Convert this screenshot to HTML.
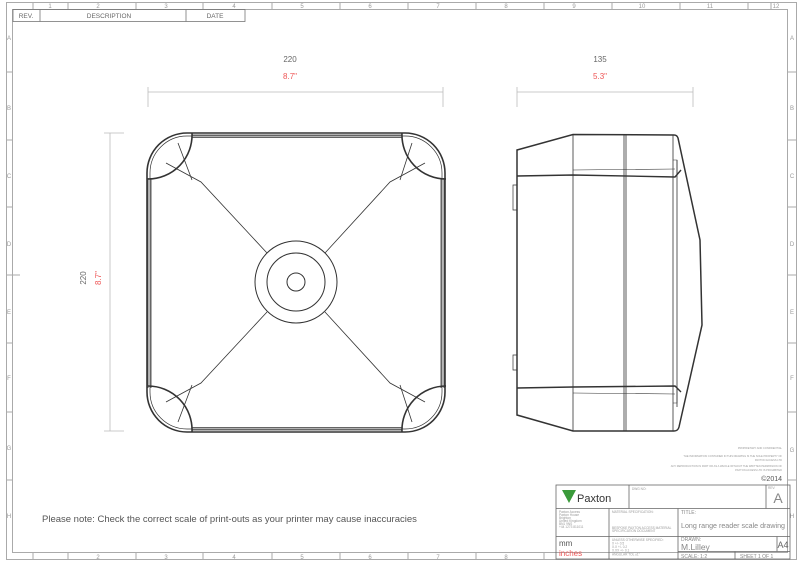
<!DOCTYPE html>
<html><head><meta charset="utf-8"><style>
html,body{margin:0;padding:0;background:#fff;}
svg{display:block;font-family:"Liberation Sans",sans-serif;}
</style></head><body>
<svg width="800" height="566" viewBox="0 0 800 566" xmlns="http://www.w3.org/2000/svg">
<g fill="none" stroke="#aaa" stroke-width="1">
<rect x="6.5" y="2.5" width="790" height="557"/>
<rect x="12.5" y="9.5" width="775" height="543"/>
<path d="M33 2v7M68 2v7M136 2v7M203 2v7M272 2v7M340 2v7M408 2v7M476 2v7M544 2v7M612 2v7M680 2v7M748 2v7M771 2v7"/>
<path d="M33 553v7M68 553v7M136 553v7M203 553v7M272 553v7M340 553v7M408 553v7M476 553v7M544 553v7"/>
<path d="M6 72h6M6 140h6M6 207h6M6 275h14M6 343h6M6 412h6M6 480h6"/>
<path d="M788 72h9M788 140h9M788 207h9M788 275h9M788 343h9M788 412h9M788 480h9"/>
</g>
<g font-size="6" fill="#999" text-anchor="middle">
<text x="50" y="8">1</text><text x="98" y="8">2</text><text x="166" y="8">3</text><text x="234" y="8">4</text><text x="302" y="8">5</text><text x="370" y="8">6</text><text x="438" y="8">7</text><text x="506" y="8">8</text><text x="574" y="8">9</text><text x="642" y="8">10</text><text x="710" y="8">11</text><text x="776" y="8">12</text>
<text x="98" y="559">2</text><text x="166" y="559">3</text><text x="234" y="559">4</text><text x="302" y="559">5</text><text x="370" y="559">6</text><text x="438" y="559">7</text><text x="506" y="559">8</text>
<text x="9" y="40">A</text><text x="9" y="110">B</text><text x="9" y="178">C</text><text x="9" y="246">D</text><text x="9" y="314">E</text><text x="9" y="380">F</text><text x="9" y="450">G</text><text x="9" y="518">H</text>
<text x="792" y="40">A</text><text x="792" y="110">B</text><text x="792" y="178">C</text><text x="792" y="246">D</text><text x="792" y="314">E</text><text x="792" y="380">F</text><text x="792" y="452">G</text><text x="792" y="518">H</text>
</g>
<g fill="none" stroke="#777" stroke-width="0.8"><rect x="13" y="9.5" width="232" height="12"/><path d="M40 9.5v12M186 9.5v12"/></g>
<g font-size="6.5" fill="#666" text-anchor="middle"><text x="26" y="18">REV.</text><text x="109" y="18">DESCRIPTION</text><text x="215" y="18">DATE</text></g>
<g stroke="#bbb" stroke-width="0.8" fill="none">
<path d="M148 87v20M443 87v20M148 92h295"/>
<path d="M517 87v20M693 87v20M517 92h176"/>
<path d="M104 133h20M104 431h20M110 133v298"/>
</g>
<g font-size="8" text-anchor="middle"><text x="290" y="62" fill="#666">220</text><text x="290" y="79" fill="#e55">8.7"</text>
<text x="600" y="62" fill="#666">135</text><text x="600" y="79" fill="#e55">5.3"</text>
<text transform="translate(86,278) rotate(-90)" fill="#666">220</text><text transform="translate(101,278) rotate(-90)" fill="#e55">8.7"</text></g>
<g fill="none" stroke="#333" stroke-width="1">
<rect x="147" y="133" width="298" height="299" rx="40" stroke-width="1.6"/>
<rect x="150" y="136" width="292" height="293" rx="37" stroke-width="0.7"/>
<path d="M192 135h210M192 137.5h210M192 430h210M192 427.5h210M148 178v210M151 178v210M444 178v210M441 178v210" stroke-width="0.8"/>
<path d="M192 133a44 44 0 0 1 -44 46M402 133a44 44 0 0 0 44 46M192 432a44 44 0 0 0 -44 -46M402 432a44 44 0 0 1 44 -46" stroke-width="1.6"/>
<path d="M166 163L201 182L267 253M178 143L192 180M425 163L390 182L325 253M412 143L400 180M166 402L201 383L267 312M178 422L192 385M425 402L390 383L325 312M412 422L400 385" stroke-width="0.8"/>
<circle cx="296" cy="282" r="41"/><circle cx="296" cy="282" r="29"/><circle cx="296" cy="282" r="9"/>
</g>
<g fill="none" stroke="#333" stroke-width="1">
<path d="M517 150L573 134.5L674 135Q677 135 678 138L700 240L702 325L679 427Q678 431 674 431L573 431L517 415Z" stroke-width="1.5"/>
<path d="M517 176L573 175L675 177L681 170M517 388L573 387L675 386L681 392" stroke-width="1.4"/>
<path d="M573 134v297M624 134v297M626 134v297M673 135v296M677 160v247" stroke-width="0.8"/>
<path d="M573 170L675 169M573 393L675 394M673 160h4v15M673 403h4v-15" stroke-width="0.6"/>
<path d="M517 185h-4v25h4M517 355h-4v15h4" stroke-width="0.7"/>
</g>
<g font-size="2.6" fill="#999" text-anchor="end"><text x="782" y="449">PROPRIETARY AND CONFIDENTIAL</text><text x="782" y="457">THE INFORMATION CONTAINED IN THIS DRAWING IS THE SOLE PROPERTY OF</text><text x="782" y="461">PAXTON ACCESS LTD</text><text x="782" y="467">ANY REPRODUCTION IN PART OR AS A WHOLE WITHOUT THE WRITTEN PERMISSION OF</text><text x="782" y="471">PAXTON ACCESS LTD IS PROHIBITED</text></g>
<text x="782" y="481" font-size="7" fill="#555" text-anchor="end">©2014</text>
<text x="42" y="522" font-size="9.5" fill="#555">Please note: Check the correct scale of print-outs as your printer may cause inaccuracies</text>
<g fill="none" stroke="#666" stroke-width="0.8">
<rect x="556" y="485" width="234" height="74"/>
<path d="M556 508.5h234M556 536.5h234M629 485v23.5M766 485v23.5M609 508.5v50.5M678 508.5v50.5M777 536.5v15M678 551.5h112M735 551.5v7.5"/>
</g>
<path d="M562 490h14l-7 13z" fill="#3a9a3a"/>
<text x="577" y="502" font-size="11" fill="#333">Paxton</text>
<g font-size="3.2" fill="#999"><text x="632" y="490">DWG NO:</text><text x="768" y="489">REV:</text><text x="612" y="513">MATERIAL SPECIFICATION:</text><text x="612" y="529">BESPOKE PAXTON ACCESS MATERIAL</text><text x="612" y="532">SPECIFICATION DOCUMENT</text>
<text x="559" y="513">Paxton Access</text><text x="559" y="516">Paxton House</text><text x="559" y="519">Brighton</text><text x="559" y="522">United Kingdom</text><text x="559" y="525">BN1 9NS</text><text x="559" y="528">+44 1273 811011</text>
<text x="612" y="541">UNLESS OTHERWISE SPECIFIED:</text><text x="612" y="544.5">X       +/- 0.5</text><text x="612" y="548">X.X     +/- 0.2</text><text x="612" y="551.5">X.XX    +/- 0.1</text><text x="612" y="555.5">ANGULAR TOL ±1°</text></g>
<g font-size="5" fill="#888"><text x="681" y="514">TITLE:</text><text x="681" y="541">DRAWN:</text><text x="681" y="558">SCALE: 1:2</text><text x="740" y="558">SHEET 1 OF 1</text></g>
<text x="681" y="528" font-size="7.5" fill="#888" textLength="104" lengthAdjust="spacingAndGlyphs">Long range reader scale drawing</text>
<text x="681" y="550" font-size="8.5" fill="#888">M.Lilley</text>
<text x="778" y="503" font-size="14" fill="#888" text-anchor="middle">A</text>
<text x="783" y="548" font-size="9" fill="#666" text-anchor="middle">A4</text>
<text x="559" y="546" font-size="8" fill="#555">mm</text>
<text x="559" y="556" font-size="8" fill="#e55">inches</text>
</svg>
</body></html>
